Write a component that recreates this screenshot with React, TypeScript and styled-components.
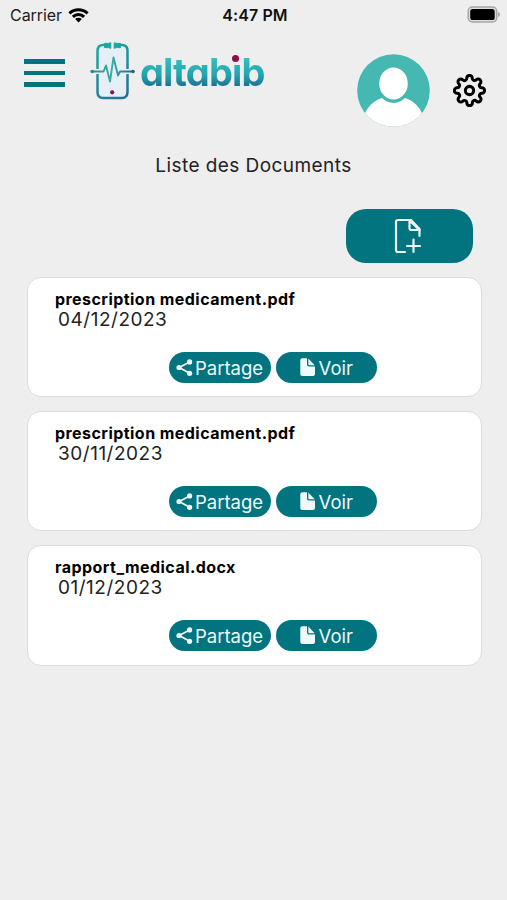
import React from "react";
import styled, { createGlobalStyle } from "styled-components";
import { FiSettings } from "react-icons/fi";

const TEAL = "#017480";

const GlobalStyle = createGlobalStyle`
  * { box-sizing: border-box; }
  body { margin: 0; background: #eeeeee; }
  button { border: 0; padding: 0; background: none; font: inherit; color: inherit; }
`;

const Screen = styled.main`
  width: 507px;
  height: 900px;
  overflow: hidden;
  background: #eeeeee;
  color: #222;
  font-family: Inter, "Liberation Sans", sans-serif;
`;

const StatusBar = styled.div`
  display: grid;
  grid-template-columns: 1fr auto 1fr;
  align-items: center;
  height: 30px;
  padding: 0 7px 0 10px;
`;

const Carrier = styled.div`
  display: flex;
  align-items: center;
  gap: 6px;
  font-size: 16px;
  letter-spacing: -0.05px;
  color: #1c1c1c;
`;

const Clock = styled.div`
  font-size: 16px;
  font-weight: 600;
  letter-spacing: 0.1px;
  color: #111;
`;

const BatterySlot = styled.div`
  display: flex;
  justify-content: flex-end;
  margin-top: -2px;
`;

const Header = styled.header`
  display: flex;
  align-items: flex-start;
  height: 102px;
  padding-left: 24px;
`;

const MenuButton = styled.button`
  display: flex;
  flex-direction: column;
  gap: 7px;
  width: 41px;
  margin: 29px 25px 0 0;
`;

const MenuBar = styled.span`
  height: 4.6px;
  background: ${TEAL};
`;

const Logo = styled.div`
  display: flex;
  width: 266.500px;
  padding-top: 11px;
`;

const WordmarkBox = styled.div`
  position: relative;
  height: 45px;
  margin: 9px 0 0 5px;
`;

const Wordmark = styled.span`
  display: block;
  font-size: 38px;
  line-height: 45px;
  font-weight: 700;
  letter-spacing: -0.85px;
  font-feature-settings: "cv11";
  white-space: nowrap;
  background: linear-gradient(#31bfc0 20%, #23a5ae 55%, #1a6d8f 83%);
  background-clip: text;
  -webkit-background-clip: text;
  color: transparent;
`;

const LogoDot = styled.span`
  position: absolute;
  left: 92px;
  top: 5px;
  width: 8px;
  height: 10px;
  background: #eeeeee;
  &::after {
    content: "";
    display: block;
    width: 7px;
    height: 7px;
    border-radius: 50%;
    background: #8c0f4a;
  }
`;

const Avatar = styled.div`
  display: flex;
  margin: 24px 23px 0 0;
`;

const SettingsButton = styled.button`
  display: flex;
  margin-top: 44px;
  color: #000;
`;

const Title = styled.h1`
  margin: 22px 0 0;
  height: 24px;
  line-height: 24px;
  text-align: center;
  font-size: 19px;
  font-weight: 400;
  letter-spacing: 0.43px;
`;

const AddButton = styled.button`
  display: flex;
  align-items: center;
  justify-content: center;
  width: 127px;
  height: 54px;
  margin: 31px 34px 14px auto;
  padding-right: 3px;
  border-radius: 20px;
  background: ${TEAL};
`;

const DocumentList = styled.ul`
  display: flex;
  flex-direction: column;
  gap: 14px;
  margin: 0;
  padding: 0 25px 0 27px;
  list-style: none;
`;

const Card = styled.li`
  height: 120.2px;
  padding: 12px 28px 0 27px;
  border: 1px solid #dcdcdc;
  border-radius: 14px;
  background: #fff;
`;

const FileName = styled.div`
  height: 20px;
  line-height: 19px;
  font-size: 16px;
  font-weight: 700;
  letter-spacing: 0.45px;
  color: #000;
`;

const FileDate = styled.div`
  height: 20px;
  margin-left: 3px;
  line-height: 20px;
  font-size: 19px;
  letter-spacing: 0.52px;
`;

const Actions = styled.div`
  display: flex;
  gap: 5px;
  margin: 22px 0 0 114px;
`;

const Action = styled.button<{ $gap: number }>`
  display: flex;
  align-items: center;
  justify-content: center;
  gap: ${(p) => p.$gap}px;
  width: 101.5px;
  height: 31px;
  border-radius: 16px;
  background: ${TEAL};
  color: #effafb;
  font-size: 18.5px;
  line-height: 31px;
`;

const Label = styled.span`
  padding-top: 2px;
`;

const WifiIcon = () => (
  <svg width="21" height="16" viewBox="0 0 21 16" fill="none" stroke="#000" strokeWidth="3">
    <path d="M1.4 6.4a13 13 0 0 1 18.2 0" />
    <path d="M4.9 9.9a8 8 0 0 1 11.2 0" />
    <path d="M10.5 15.4 7.2 12a4.7 4.7 0 0 1 6.6 0z" fill="#000" stroke="none" />
  </svg>
);

const BatteryIcon = () => (
  <svg width="33" height="17" viewBox="0 0 33 17">
    <rect x="1.2" y="1" width="28.5" height="15" rx="4.2" fill="#dedede" stroke="#a6a6a6" strokeWidth="1.5" />
    <rect x="3.2" y="3" width="24.5" height="11" rx="2.6" />
    <path d="M31 6v5q2-.7 2-2.5T31 6z" fill="#a6a6a6" />
  </svg>
);

const PhoneLogo = () => (
  <svg width="45" height="60" viewBox="0 0 45 60" fill="none">
    <defs>
      <linearGradient id="frame" x1="5" y1="5" x2="41" y2="55" gradientUnits="userSpaceOnUse">
        <stop stopColor="#20a89f" />
        <stop offset=".5" stopColor="#278a99" />
        <stop offset="1" stopColor="#236f93" />
      </linearGradient>
      <linearGradient id="pulse" x1="1" y1="30" x2="44" y2="30" gradientUnits="userSpaceOnUse">
        <stop stopColor="#1a9591" />
        <stop offset=".5" stopColor="#37ada7" />
        <stop offset="1" stopColor="#1b6488" />
      </linearGradient>
    </defs>
    <rect x="8" y="5" width="29" height="52" rx="6" fill="#e5eff5" />
    <path d="M16 4h-3q-5.5 0-5.5 6v41q0 6 5.5 6h19q5.5 0 5.5-6V10q0-6-5.5-6h-3" stroke="url(#frame)" strokeWidth="2.5" />
    <path d="M4 30.500h7M34 30.500h7" stroke="#eeeeee" strokeWidth="5" />
    <path d="M2 30.500h11.500l2.500-6 4 16 3.500-24 4.500 18 2-4h13" stroke="url(#pulse)" strokeWidth="1.9" strokeLinejoin="round" />
    <path d="M14.500 2.400h4l2.300-.6v5.500l-2.300-.7h-4zM30.500 2.400h-4l-2.300-.6v5.500l2.300-.7h4z" fill="#19a89f" stroke="#19a89f" strokeLinejoin="round" />
    <circle cx="2.2" cy="30.5" r="1.8" fill="#178f8c" />
    <circle cx="43" cy="30.5" r="1.8" fill="#1b6488" />
    <circle cx="22.2" cy="51.3" r="2.1" fill="#8c0f4a" />
  </svg>
);

const AvatarIcon = () => (
  <svg width="73" height="73" viewBox="0 0 73 73">
    <defs>
      <clipPath id="disc"><circle cx="36.5" cy="36.5" r="36.3" /></clipPath>
    </defs>
    <g clipPath="url(#disc)">
      <rect width="73" height="73" fill="#45b8b1" />
      <path d="M7 62c3-9 9-15 18-18q11.500 6.500 23 0c9 3 15 9 18 18v13H7z" fill="#fff" />
      <ellipse cx="36.5" cy="29.5" rx="17" ry="19.5" fill="#45b8b1" />
      <ellipse cx="36.5" cy="29.5" rx="14.3" ry="16" fill="#fff" />
    </g>
  </svg>
);

const FileAddIcon = () => (
  <svg width="28" height="36" viewBox="0 0 28 36" fill="none" stroke="#effafb" strokeWidth="2.2" strokeLinecap="round" strokeLinejoin="round">
    <path d="M11 34H4q-2 0-2-2V4q0-2 2-2h13l8.5 9v7" />
    <path d="M15.500 2.500V10q0 2 2 2h8z" />
    <path d="M19.500 21.500v12.500M13 28h13" />
  </svg>
);

const ShareIcon = () => (
  <svg width="17" height="18" viewBox="0 0 17 18" fill="#effafb">
    <path d="M13.6 3 3.200 8.500l10.400 5.800" fill="none" stroke="#effafb" strokeWidth="1.700" />
    <circle cx="13.6" cy="2.900" r="2.600" />
    <circle cx="3" cy="8.500" r="2.600" />
    <circle cx="13.6" cy="14.300" r="2.600" />
  </svg>
);

const FileIcon = () => (
  <svg width="15" height="19" viewBox="0 0 15 19" fill="#effafb">
    <path d="M2.300.2H7V6.500q0 2 2 2h6v7.800q0 1.800-2 1.800H2.300q-2 0-2-1.800v-14Q.3.2 2.300.2z" />
    <path d="M8.300.4 14.700 7.200H9.500q-1.200 0-1.200-1.200z" />
  </svg>
);

const documents = [
  { name: "prescription medicament.pdf", date: "04/12/2023" },
  { name: "prescription medicament.pdf", date: "30/11/2023" },
  { name: "rapport_medical.docx", date: "01/12/2023" },
];

export default function App() {
  return (
    <Screen>
      <GlobalStyle />
      <StatusBar>
        <Carrier>Carrier <WifiIcon /></Carrier>
        <Clock>4:47 PM</Clock>
        <BatterySlot><BatteryIcon /></BatterySlot>
      </StatusBar>
      <Header>
        <MenuButton aria-label="Menu"><MenuBar /><MenuBar /><MenuBar /></MenuButton>
        <Logo>
          <PhoneLogo />
          <WordmarkBox>
            <Wordmark>altabib</Wordmark>
            <LogoDot />
          </WordmarkBox>
        </Logo>
        <Avatar><AvatarIcon /></Avatar>
        <SettingsButton aria-label="Paramètres"><FiSettings size={33} strokeWidth={2.2} /></SettingsButton>
      </Header>
      <Title>Liste des Documents</Title>
      <AddButton aria-label="Ajouter"><FileAddIcon /></AddButton>
      <DocumentList>
        {documents.map((doc, index) => (
          <Card key={index}>
            <FileName>{doc.name}</FileName>
            <FileDate>{doc.date}</FileDate>
            <Actions>
              <Action $gap={1.5}><ShareIcon /><Label>Partage</Label></Action>
              <Action $gap={4}><FileIcon /><Label>Voir</Label></Action>
            </Actions>
          </Card>
        ))}
      </DocumentList>
    </Screen>
  );
}
